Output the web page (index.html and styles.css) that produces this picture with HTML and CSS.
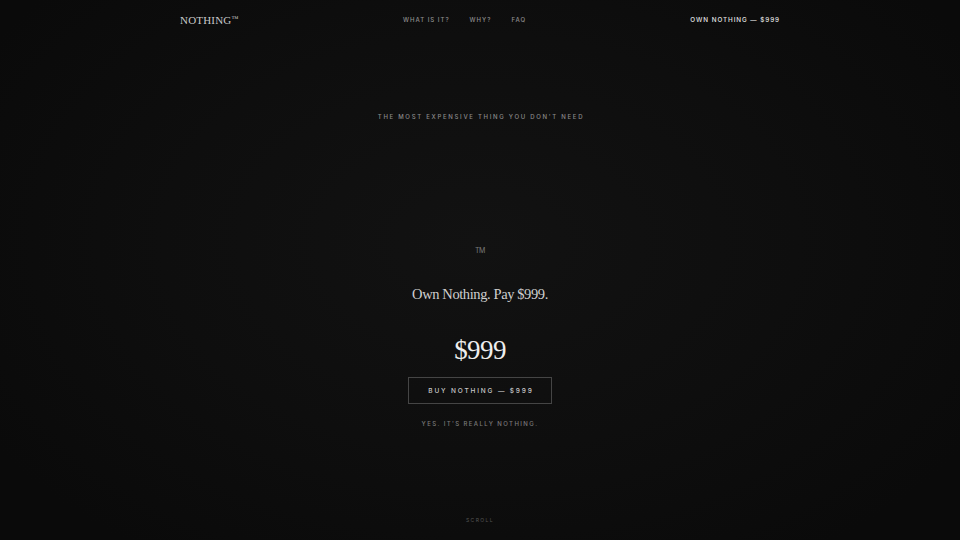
FILE: index.html
```html
<!DOCTYPE html>
<html lang="en">
<head>
<meta charset="utf-8">
<title>NOTHING™</title>
<link rel="stylesheet" href="styles.css">
</head>
<body>
<div class="page">
  <header class="nav">
    <div class="logo">NOTHING<span class="logo-tm">™</span></div>
    <nav class="links">
      <a href="#what">WHAT IS IT?</a>
      <a href="#why">WHY?</a>
      <a href="#faq">FAQ</a>
    </nav>
    <a class="nav-cta" href="#buy">OWN NOTHING — $999</a>
  </header>
  <main class="hero">
    <p class="tagline">THE MOST EXPENSIVE THING YOU DON'T NEED</p>
    <div class="tm">TM</div>
    <h1 class="headline">Own Nothing. Pay $999.</h1>
    <div class="price">$999</div>
    <a class="buy" href="#buy">BUY NOTHING — $999</a>
    <p class="note">YES. IT'S REALLY NOTHING.</p>
    <div class="scroll">SCROLL</div>
  </main>
</div>
</body>
</html>
```

FILE: styles.css
```css
* { box-sizing: border-box; margin: 0; padding: 0; }
html, body { width: 960px; height: 540px; overflow: hidden; }
body {
  background: #0b0b0b;
  font-family: "Inter", "Liberation Sans", sans-serif;
  color: #ccc;
}
.page {
  width: 960px;
  height: 540px;
  display: flex;
  flex-direction: column;
  background: radial-gradient(ellipse 60% 70% at 50% 45%, #121212 0%, #0e0e0e 55%, #0a0a0a 100%);
}
a { text-decoration: none; color: inherit; }
.nav {
  width: 600px;
  margin: 0 auto;
  height: 39px;
  display: flex;
  align-items: center;
}
.logo {
  font-family: "Liberation Serif", serif;
  font-size: 11px;
  color: #c9c9c9;
  letter-spacing: 0.2px;
  width: 223px;
}
.logo-tm { font-size: 7px; vertical-align: 3px; }
.links {
  display: flex;
  gap: 20px;
  font-size: 6px;
  letter-spacing: 1px;
  color: #8f8f8f;
  font-weight: 500;
}
.nav-cta {
  margin-left: auto;
  font-size: 6.3px;
  letter-spacing: 0.95px;
  color: #e2e2e2;
  font-weight: 500;
  padding-top: 1px;
}
.hero {
  flex: 1;
  display: flex;
  flex-direction: column;
  align-items: center;
  padding-top: 74px;
  padding-bottom: 16px;
}
.tagline {
  font-size: 6px;
  line-height: 8px;
  letter-spacing: 1.7px;
  color: #8a8a8a;
  font-weight: 500;
  padding-left: 2px;
}
.tm {
  margin-top: 125px;
  font-size: 7px;
  line-height: 9px;
  color: #7a7a7a;
  letter-spacing: -0.3px;
}
.headline {
  margin-top: 29px;
  font-family: "Liberation Serif", serif;
  font-weight: 400;
  font-size: 14.5px;
  line-height: 20px;
  color: #cfcfcf;
  letter-spacing: -0.4px;
}
.price {
  margin-top: 28px;
  font-family: "Liberation Serif", serif;
  font-size: 27px;
  line-height: 36px;
  color: #eeeeee;
  letter-spacing: -0.6px;
}
.buy {
  margin-top: 9px;
  width: 144px;
  height: 27px;
  border: 1px solid #454545;
  display: flex;
  align-items: center;
  justify-content: center;
  font-size: 6.5px;
  letter-spacing: 1.85px;
  color: #c8c8c8;
  font-weight: 500;
  padding-left: 2px;
}
.note {
  margin-top: 16px;
  font-size: 6px;
  line-height: 8px;
  letter-spacing: 1.4px;
  color: #7a7a7a;
  font-weight: 500;
}
.scroll {
  margin-top: auto;
  font-size: 5px;
  line-height: 7px;
  letter-spacing: 1.4px;
  color: #555;
}
```
